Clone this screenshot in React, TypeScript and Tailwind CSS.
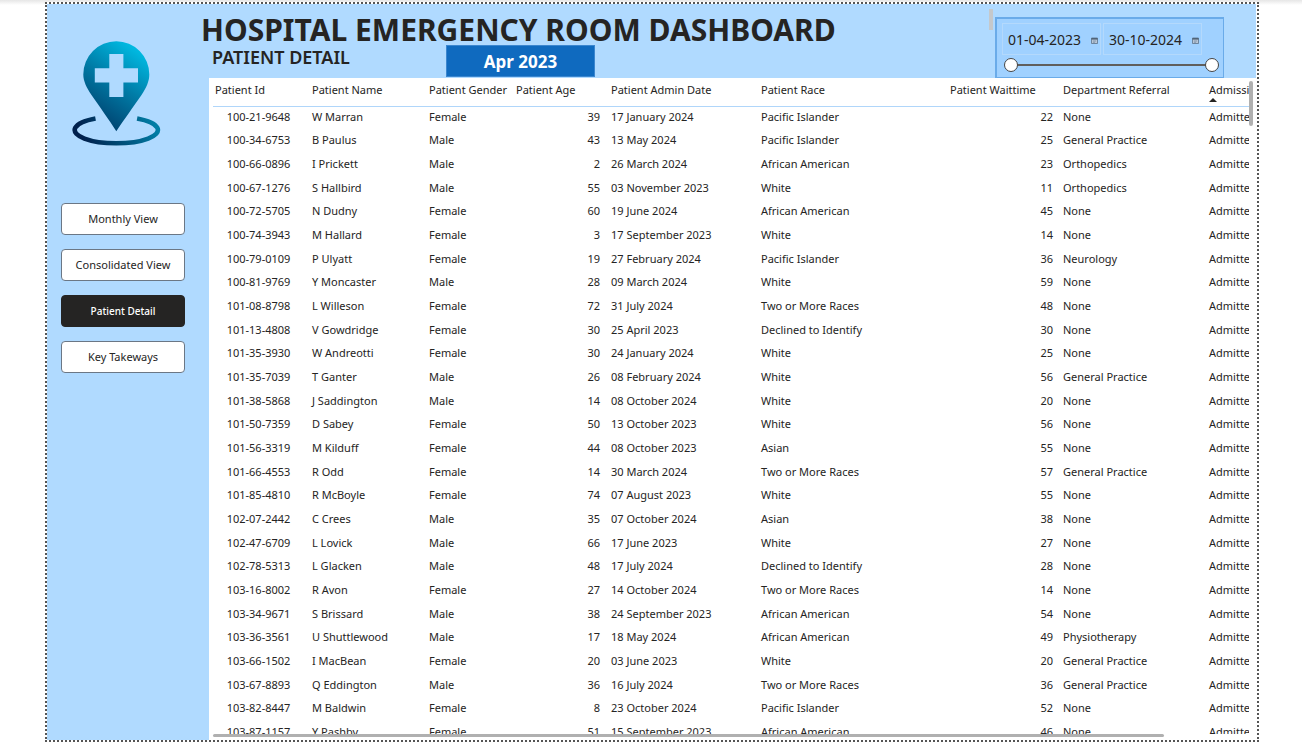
import { useState } from "react";
import type { ReactNode } from "react";

type Patient = [string, string, "Female" | "Male", number, string, string, number, string];

const PATIENTS: Patient[] = [
  ["100-21-9648", "W Marran", "Female", 39, "17 January 2024", "Pacific Islander", 22, "None"],
  ["100-34-6753", "B Paulus", "Male", 43, "13 May 2024", "Pacific Islander", 25, "General Practice"],
  ["100-66-0896", "I Prickett", "Male", 2, "26 March 2024", "African American", 23, "Orthopedics"],
  ["100-67-1276", "S Hallbird", "Male", 55, "03 November 2023", "White", 11, "Orthopedics"],
  ["100-72-5705", "N Dudny", "Female", 60, "19 June 2024", "African American", 45, "None"],
  ["100-74-3943", "M Hallard", "Female", 3, "17 September 2023", "White", 14, "None"],
  ["100-79-0109", "P Ulyatt", "Female", 19, "27 February 2024", "Pacific Islander", 36, "Neurology"],
  ["100-81-9769", "Y Moncaster", "Male", 28, "09 March 2024", "White", 59, "None"],
  ["101-08-8798", "L Willeson", "Female", 72, "31 July 2024", "Two or More Races", 48, "None"],
  ["101-13-4808", "V Gowdridge", "Female", 30, "25 April 2023", "Declined to Identify", 30, "None"],
  ["101-35-3930", "W Andreotti", "Female", 30, "24 January 2024", "White", 25, "None"],
  ["101-35-7039", "T Ganter", "Male", 26, "08 February 2024", "White", 56, "General Practice"],
  ["101-38-5868", "J Saddington", "Male", 14, "08 October 2024", "White", 20, "None"],
  ["101-50-7359", "D Sabey", "Female", 50, "13 October 2023", "White", 56, "None"],
  ["101-56-3319", "M Kilduff", "Female", 44, "08 October 2023", "Asian", 55, "None"],
  ["101-66-4553", "R Odd", "Female", 14, "30 March 2024", "Two or More Races", 57, "General Practice"],
  ["101-85-4810", "R McBoyle", "Female", 74, "07 August 2023", "White", 55, "None"],
  ["102-07-2442", "C Crees", "Male", 35, "07 October 2024", "Asian", 38, "None"],
  ["102-47-6709", "L Lovick", "Male", 66, "17 June 2023", "White", 27, "None"],
  ["102-78-5313", "L Glacken", "Male", 48, "17 July 2024", "Declined to Identify", 28, "None"],
  ["103-16-8002", "R Avon", "Female", 27, "14 October 2024", "Two or More Races", 14, "None"],
  ["103-34-9671", "S Brissard", "Male", 38, "24 September 2023", "African American", 54, "None"],
  ["103-36-3561", "U Shuttlewood", "Male", 17, "18 May 2024", "African American", 49, "Physiotherapy"],
  ["103-66-1502", "I MacBean", "Female", 20, "03 June 2023", "White", 20, "General Practice"],
  ["103-67-8893", "Q Eddington", "Male", 36, "16 July 2024", "Two or More Races", 36, "General Practice"],
  ["103-82-8447", "M Baldwin", "Female", 8, "23 October 2024", "Pacific Islander", 52, "None"],
  ["103-87-1157", "Y Pashby", "Female", 51, "15 September 2023", "African American", 46, "None"],
];

const VIEWS = ["Monthly View", "Consolidated View", "Patient Detail", "Key Takeways"];

function Logo() {
  return (
    <svg viewBox="72 41 89 105" className="h-[105px] w-[89px]" role="img" aria-label="Hospital location">
      <defs>
        <linearGradient id="pin" gradientUnits="userSpaceOnUse" x1="142" y1="54" x2="98" y2="118">
          <stop offset="0" stopColor="#00b8e0" />
          <stop offset="0.5" stopColor="#007ba6" />
          <stop offset="1" stopColor="#004673" />
        </linearGradient>
        <linearGradient id="ring" gradientUnits="userSpaceOnUse" x1="84" y1="142" x2="152" y2="116">
          <stop offset="0" stopColor="#00204d" />
          <stop offset="1" stopColor="#007ea6" />
        </linearGradient>
      </defs>
      <path
        d="M116.3 131.2 C110 121 99 106 91.500 95 C86.500 87.500 83.300 81 83.300 74.500 A33 33.200 0 0 1 149.300 74.500 C149.300 81 146.500 87.500 141.500 95 C134 106 123 121 116.300 131.200 Z"
        fill="url(#pin)"
      />
      <path d="M109.300 54 H123.400 V68.300 H138 V82.500 H123.400 V97 H109.300 V82.500 H94.800 V68.300 H109.300 Z" fill="#b0daff" />
      <path d="M95.500 118.500 A41.600 13.300 0 1 0 137.100 118.500" fill="none" stroke="url(#ring)" strokeWidth="4.600" />
    </svg>
  );
}

function CalendarIcon() {
  return (
    <svg viewBox="0 0 7 7" className="h-[7px] w-[7px] shrink-0" aria-hidden="true">
      <path d="M0.500 1 H6.500 V6.500 H0.500 Z" fill="#b9c6d6" stroke="#5d7289" strokeWidth="0.800" />
      <path d="M0.500 1 H6.500 V2.600 H0.500 Z" fill="#4f6479" />
      <path d="M2 4 H5 M2 5.300 H4" stroke="#71879e" strokeWidth="0.700" />
    </svg>
  );
}

function DateBox({ label, value }: { label: string; value: string }) {
  const [text, setText] = useState(value);
  return (
    <label className="flex h-8 w-[99px] items-center border border-[#b4d9fc] pr-[2px] pl-[5px] pt-[2px]">
      <input
        aria-label={label}
        value={text}
        onChange={(e) => setText(e.target.value)}
        className="w-full min-w-0 bg-transparent text-[14px] leading-5 text-[#252423] outline-none"
      />
      <CalendarIcon />
    </label>
  );
}

const THUMB =
  "pointer-events-none absolute inset-0 h-full w-full appearance-none bg-transparent [&::-webkit-slider-thumb]:pointer-events-auto [&::-webkit-slider-thumb]:h-[14px] [&::-webkit-slider-thumb]:w-[14px] [&::-webkit-slider-thumb]:appearance-none [&::-webkit-slider-thumb]:rounded-full [&::-webkit-slider-thumb]:border [&::-webkit-slider-thumb]:border-[#444] [&::-webkit-slider-thumb]:bg-white";

function DateSlicer() {
  const [from, setFrom] = useState(0);
  const [to, setTo] = useState(578);
  return (
    <section className="h-[61px] w-[229px] border-2 border-r border-b border-[#6aabe9] bg-[#a0d1ff] px-[5px] pt-1" aria-label="Date range">
      <div className="flex gap-[2px]">
        <DateBox label="Start date" value="01-04-2023" />
        <DateBox label="End date" value="30-10-2024" />
      </div>
      <div className="relative mt-[3px] ml-[2px] flex h-[14px] w-[215px] items-center px-[7px]">
        <div className="h-[2px] w-full bg-[#605e5c]" />
        <input type="range" aria-label="From day" min={0} max={578} value={from} onChange={(e) => setFrom(+e.target.value)} className={THUMB} />
        <input type="range" aria-label="To day" min={0} max={578} value={to} onChange={(e) => setTo(+e.target.value)} className={THUMB} />
      </div>
    </section>
  );
}

function Th({ children }: { children: ReactNode }) {
  return <th className="h-[29px] overflow-visible border-b border-[#b0d6fa] pt-1 pl-[5px] text-left align-top font-normal whitespace-nowrap first:pl-[2px]">{children}</th>;
}

function PatientTable() {
  return (
    <table className="w-[1171px] table-fixed border-separate border-spacing-0 text-[11px] leading-4 text-[#252423]">
      <colgroup>
        <col className="w-[94px]" />
        <col className="w-[117px]" />
        <col className="w-[87px]" />
        <col className="w-[95px]" />
        <col className="w-[150px]" />
        <col className="w-[189px]" />
        <col className="w-[113px]" />
        <col className="w-[146px]" />
        <col />
      </colgroup>
      <thead>
        <tr>
          <Th>Patient Id</Th>
          <Th>Patient Name</Th>
          <Th>Patient Gender</Th>
          <Th>Patient Age</Th>
          <Th>Patient Admin Date</Th>
          <Th>Patient Race</Th>
          <Th>Patient Waittime</Th>
          <Th>Department Referral</Th>
          <Th>
            Admission Status
            <svg viewBox="0 0 8 4" className="h-1 w-2" aria-hidden="true">
              <path d="M0 4 L4 0 L8 4 Z" fill="#252423" />
            </svg>
          </Th>
        </tr>
      </thead>
      <tbody className="[&>tr:nth-child(3n+1)]:h-[23px] [&_td]:pb-1 [&_td]:pl-[5px]">
        {PATIENTS.map(([id, name, gender, age, date, race, wait, dept]) => (
          <tr key={id} className="h-6 whitespace-nowrap">
            <td className="pr-2 text-center">{id}</td>
            <td>{name}</td>
            <td>{gender}</td>
            <td className="pr-[6px] text-right">{age}</td>
            <td>{date}</td>
            <td>{race}</td>
            <td className="pr-[5px] text-right">{wait}</td>
            <td>{dept}</td>
            <td>Admitted</td>
          </tr>
        ))}
      </tbody>
    </table>
  );
}

export default function App() {
  const [view, setView] = useState("Patient Detail");
  return (
    <div className="flex h-screen flex-col bg-white bg-linear-to-b from-[#e6e6e6] to-white to-[5px] pt-[2px] pr-[43px] pb-px pl-[45px] font-['Noto_Sans','Open_Sans',sans-serif]">
      <div className="flex min-h-0 flex-1 border-2 border-dotted border-[#555] bg-white">
        <aside className="flex w-[162px] shrink-0 flex-col bg-[#b0daff] pt-[37px]">
          <div className="pl-[25px]">
            <Logo />
          </div>
          <nav className="mt-[57px] flex flex-col gap-[14px] pr-6 pl-[14px]" aria-label="Report pages">
            {VIEWS.map((v) => (
              <button
                key={v}
                type="button"
                aria-current={v === view ? "page" : undefined}
                onClick={() => setView(v)}
                className={
                  v === view
                    ? "h-8 rounded border border-[#252423] bg-[#252423] text-[10px] font-medium text-white"
                    : "h-8 rounded border border-[#6b7785] bg-white text-[11px] text-[#252423]"
                }
              >
                {v}
              </button>
            ))}
          </nav>
        </aside>
        <main className="flex min-w-0 flex-1 flex-col pr-px">
          <header className="flex h-[74px] shrink-0 justify-between bg-[#b0daff] pr-8">
            <div className="-ml-2 flex flex-col">
              <h1 className="mt-2 h-[34px] text-[30px] leading-9 font-bold whitespace-nowrap text-[#252423]">HOSPITAL EMERGENCY ROOM DASHBOARD</h1>
              <div className="flex">
                <h2 className="-mt-px w-[245px] pl-[11px] text-[18px] leading-6 font-semibold text-[#252423]">PATIENT DETAIL</h2>
                <p className="-mt-px h-8 w-[149px] border border-[#3b86cf] bg-[#0f6abf] text-center text-[17px] leading-8 font-bold text-white">Apr 2023</p>
              </div>
            </div>
            <div className="flex gap-[2px]">
              <div className="mt-[5px] h-[21px] w-1 bg-[#c5c8cb]" />
              <div className="mt-[13px]">
                <DateSlicer />
              </div>
            </div>
          </header>
          <div className="flex min-h-0 flex-1 flex-col pl-1">
            <div className="flex min-h-0 flex-1">
              <div className="min-w-0 flex-1 overflow-hidden">
                <PatientTable />
              </div>
              <div className="mt-[3px] mr-[3px] h-[45px] w-1 rounded-xs bg-[#b0b0b0]" />
            </div>
            <div className="mb-[3px] h-[3px] w-[951px] rounded-xs bg-[#b0b0b0]" />
          </div>
        </main>
      </div>
    </div>
  );
}
